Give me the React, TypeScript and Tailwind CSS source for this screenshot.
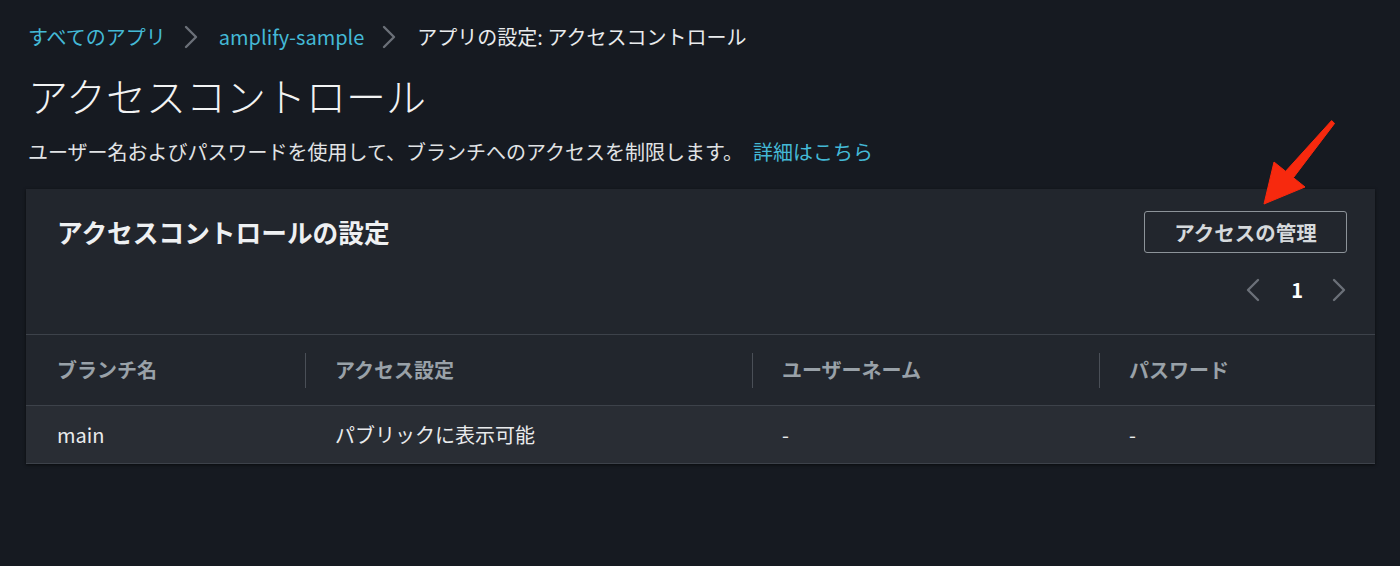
import React from 'react';

const font = { fontFamily: '"Noto Sans CJK JP", "Noto Sans", sans-serif' };

const Chevron = ({ dir = 'right', className = '' }: { dir?: 'left' | 'right'; className?: string }) => (
  <svg width="16" height="24" viewBox="0 0 16 24" className={className}>
    <polyline
      points={dir === 'right' ? '3,2 13,12 3,22' : '13,2 3,12 13,22'}
      fill="none"
      stroke="currentColor"
      strokeWidth="2.4"
      strokeLinecap="round"
      strokeLinejoin="round"
    />
  </svg>
);

const columns = ['ブランチ名', 'アクセス設定', 'ユーザーネーム', 'パスワード'];
const rows = [['main', 'パブリックに表示可能', '-', '-']];

export default function App() {
  return (
    <div className="relative min-h-[566px] w-full bg-[#161a21] text-[#e9ebed]" style={font}>
      <div className="px-[26px] pt-[23px]">
        {/* パンくず */}
        <nav className="flex items-center pl-[2px] text-[20px] leading-[28px]">
          <span className="text-[#44b9d6]">すべてのアプリ</span>
          <Chevron className="ml-[17px] mr-[20px] text-[#6b7078]" />
          <span className="text-[#44b9d6]">amplify-sample</span>
          <Chevron className="ml-[17px] mr-[20px] text-[#6b7078]" />
          <span className="text-[#e9ebed]">アプリの設定: アクセスコントロール</span>
        </nav>

        <h1 className="mt-[19px] pl-[2px] text-[40px] font-light leading-[50px] text-[#f2f3f3]">
          アクセスコントロール
        </h1>

        <p className="mt-[18px] pl-[2px] text-[20px] leading-[28px] text-[#e1e3e5]">
          ユーザー名およびパスワードを使用して、ブランチへのアクセスを制限します。
          <span className="ml-[10px] text-[#44b9d6]">詳細はこちら</span>
        </p>

        {/* パネル */}
        <div className="mt-[23px] w-[1349px] bg-[#22262d] shadow-[0_1px_3px_rgba(0,0,0,0.6)]">
          <div className="px-[31px] pt-[22px] pb-[32px] pr-[28px]">
            <div className="flex h-[42px] items-center justify-between">
              <h2 className="text-[25.7px] font-bold leading-[32px] text-[#eef0f2]">アクセスコントロールの設定</h2>
              <button className="flex h-[42px] w-[203px] items-center justify-center rounded-[3px] border border-[#8d9399] text-[20.5px] font-bold text-[#d5d9dc]">
                アクセスの管理
              </button>
            </div>
            <div className="mt-[25px] flex h-[24px] items-center justify-end">
              <Chevron dir="left" className="text-[#6b7078]" />
              <span className="ml-[30px] mr-[28px] text-[20px] font-bold leading-[24px] text-white">1</span>
              <Chevron className="text-[#6b7078]" />
            </div>
          </div>

          <div className="grid grid-cols-[279px_447px_347px_1fr] border-t border-[#3d424a]">
            {columns.map((c, i) => (
              <div key={c} className={`flex h-[70px] items-center ${i === 0 ? 'pl-[31px]' : 'pl-0'}`}>
                {i > 0 && <div className="mr-[29px] h-[35px] w-px bg-[#4a4f57]" />}
                <span className="text-[20px] font-bold text-[#99a1a8]">{c}</span>
              </div>
            ))}
          </div>

          {rows.map((r) => (
            <div
              key={r[0]}
              className="grid grid-cols-[279px_447px_347px_1fr] border-t border-b border-[#3d424a] bg-[#292d34]"
            >
              {r.map((v, i) => (
                <div key={i} className={`flex h-[57px] items-center text-[20px] text-[#e9ebed] ${i === 0 ? 'pl-[31px]' : 'pl-[30px]'}`}>
                  {v}
                </div>
              ))}
            </div>
          ))}
        </div>
      </div>

      {/* 注釈の矢印 */}
      <svg className="pointer-events-none absolute left-0 top-0" width="1400" height="566">
        <polygon
          points="1264,204 1274,162 1285.6,171.3 1331.6,120.6 1334.6,123.4 1293.4,177.7 1305,187"
          fill="#f7290e"
          stroke="#f7290e"
          strokeWidth="1"
          strokeLinejoin="round"
        />
      </svg>
    </div>
  );
}
